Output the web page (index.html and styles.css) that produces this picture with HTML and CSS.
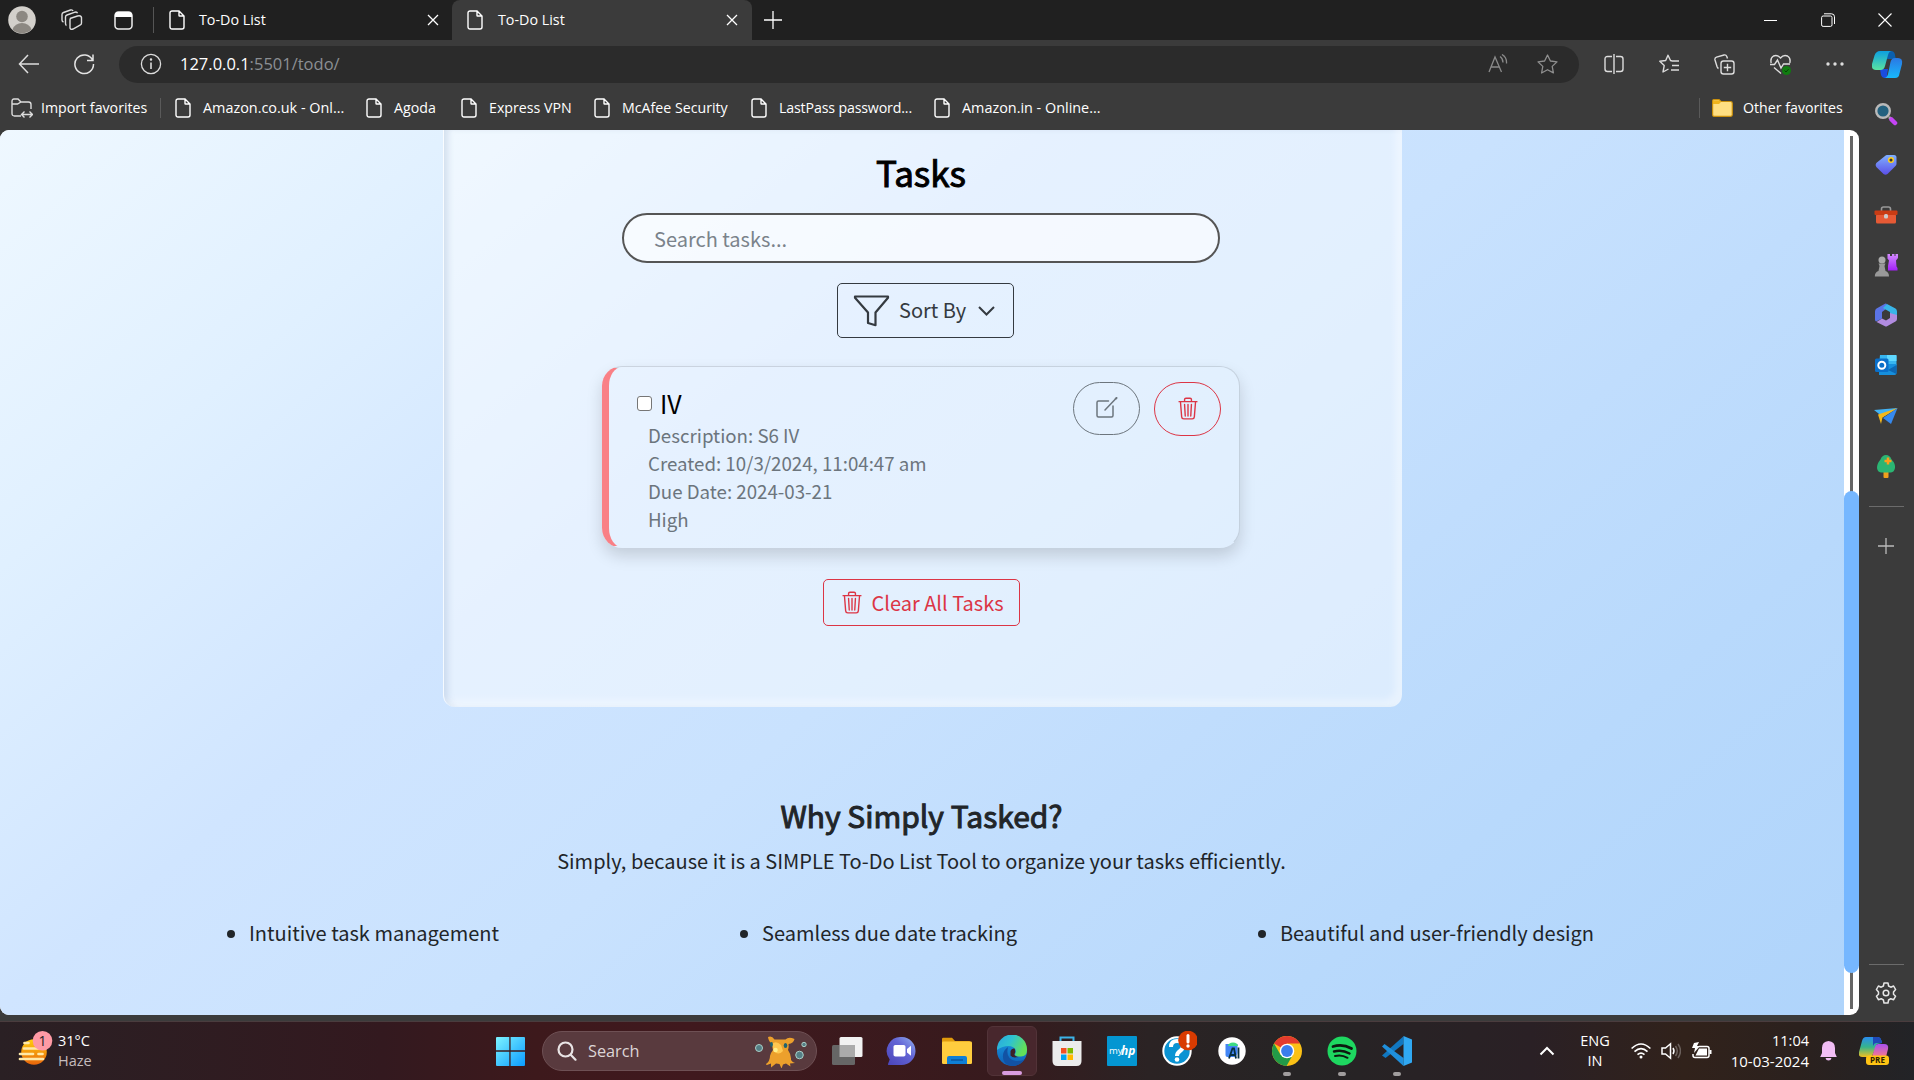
FILE: index.html
```html
<!DOCTYPE html>
<html lang="en">
<head>
<meta charset="utf-8">
<title>To-Do List</title>
<link rel="stylesheet" href="styles.css">
</head>
<body>
<svg class="defs" width="0" height="0">
  <defs>
    <symbol id="doc" viewBox="0 0 16 20"><path d="M3 1h7l5 5v11a2 2 0 0 1-2 2H3a2 2 0 0 1-2-2V3a2 2 0 0 1 2-2zM10 1v4.500q0 .5.5.5H15" fill="none" stroke="currentColor" stroke-width="1.4"/></symbol>
    <symbol id="close" viewBox="0 0 12 12"><path d="M1 1l10 10M11 1L1 11" stroke="currentColor" stroke-width="1.3"/></symbol>
    <symbol id="trash" viewBox="0 0 16 16"><path fill="currentColor" d="M6.500 1h3a.5.5 0 0 1 .5.5v1H6v-1a.5.5 0 0 1 .5-.5M11 2.500v-1A1.500 1.500 0 0 0 9.500 0h-3A1.500 1.500 0 0 0 5 1.500v1H1.500a.5.5 0 0 0 0 1h.538l.853 10.660A2 2 0 0 0 4.885 16h6.230a2 2 0 0 0 1.994-1.840l.853-10.660h.538a.5.5 0 0 0 0-1zm1.958 1-.846 10.580a1 1 0 0 1-.997.920h-6.230a1 1 0 0 1-.997-.920L3.042 3.500zm-7.487 1a.5.5 0 0 1 .528.470l.5 8.500a.5.5 0 0 1-.998.060L5 5.030a.5.5 0 0 1 .470-.530zm5.058 0a.5.5 0 0 1 .470.530l-.5 8.500a.5.5 0 1 1-.998-.060l.5-8.500a.5.5 0 0 1 .528-.470M8 4.500a.5.5 0 0 1 .5.5v8.500a.5.5 0 0 1-1 0V5a.5.5 0 0 1 .5-.5"/></symbol>
    <linearGradient id="gTeal" x1="0" y1="0" x2="0" y2="1"><stop offset="0" stop-color="#0c9fe0"/><stop offset="1" stop-color="#5be3a0"/></linearGradient>
    <linearGradient id="gBlue" x1="0" y1="0" x2="0" y2="1"><stop offset="0" stop-color="#2b78e4"/><stop offset="1" stop-color="#17b8fb"/></linearGradient>
    <linearGradient id="gTag" x1="0" y1="0" x2="0" y2="1"><stop offset="0" stop-color="#7fb0ff"/><stop offset="1" stop-color="#5b4fe8"/></linearGradient>
    <linearGradient id="gViolet" x1="0" y1="0" x2="0" y2="1"><stop offset="0" stop-color="#d38bff"/><stop offset="1" stop-color="#a21ff5"/></linearGradient>
    <linearGradient id="gWin" x1="0" y1="0" x2="1" y2="1"><stop offset="0" stop-color="#7df3ff"/><stop offset="1" stop-color="#0a9bff"/></linearGradient>
    <linearGradient id="gChat" x1="0" y1="1" x2="1" y2="0"><stop offset="0" stop-color="#4a43b8"/><stop offset=".6" stop-color="#6466d6"/><stop offset="1" stop-color="#93b4f0"/></linearGradient>
    <linearGradient id="gEdgeA" x1="0" y1="0" x2="1" y2=".4"><stop offset="0" stop-color="#2aa7e0"/><stop offset=".5" stop-color="#2fc3d0"/><stop offset="1" stop-color="#62e05a"/></linearGradient>
    <linearGradient id="gEdgeB" x1="0" y1="0" x2="0" y2="1"><stop offset="0" stop-color="#1b9de2"/><stop offset="1" stop-color="#0d5fb8"/></linearGradient>
    <linearGradient id="gSun" x1="0" y1="0" x2="0" y2="1"><stop offset="0" stop-color="#ffcf10"/><stop offset="1" stop-color="#e8640a"/></linearGradient>
    <linearGradient id="gPre" x1="0" y1="0" x2="0" y2="1"><stop offset="0" stop-color="#2a8cf0"/><stop offset=".5" stop-color="#35b58c"/><stop offset="1" stop-color="#f0c020"/></linearGradient>
    <linearGradient id="gPink" x1="0" y1="0" x2="0" y2="1"><stop offset="0" stop-color="#a950f0"/><stop offset="1" stop-color="#f77a88"/></linearGradient>
  </defs>
</svg>

<header class="tabs">
  <div class="tools">
    <svg width="28" height="28" viewBox="0 0 28 28"><circle cx="14" cy="14" r="13.800" fill="#d3d0cb"/><circle cx="14" cy="10.500" r="5.800" fill="#8c8882"/><path d="M4.500 23.500q2.500-6.500 9.500-6.500t9.500 6.500A13.800 13.800 0 0 1 4.500 23.500z" fill="#8c8882"/></svg>
    <svg class="ws" width="22" height="22" viewBox="0 0 22 22" fill="none" stroke="#ddd" stroke-width="1.400"><path d="M9 9.500l7.500-2.500q3.500-.8 4 1.500v5.500q0 1.500-1.500 2.200l-7 3.800q-2.500 1-3-1V11q0-1 .5-1.500zM5.500 16.500q-1-.5-1-2V8q0-1.500 1.500-2l8-2.800q2-.5 2.500 1M2.500 13Q1 12.500 1 11V5.500Q1 4 2.500 3.500l7-2.500q2-.5 2.500 1"/></svg>
    <svg class="ta" width="19" height="19" viewBox="0 0 19 19"><rect x="1" y="1" width="17" height="17" rx="3.500" fill="none" stroke="#eee" stroke-width="1.500"/><path d="M1 5V4q0-3 3-3h11q3 0 3 3v2H1z" fill="#fff"/></svg>
  </div>
  <div class="tab tab-idle"><svg width="16" height="20"><use href="#doc"/></svg><span>To-Do List</span><svg class="x" width="12" height="12"><use href="#close"/></svg></div>
  <div class="tab tab-active"><svg width="16" height="20"><use href="#doc"/></svg><span>To-Do List</span><svg class="x" width="12" height="12"><use href="#close"/></svg></div>
  <svg class="newtab" width="18" height="18" viewBox="0 0 18 18" stroke="#fff" stroke-width="1.300"><path d="M9 0v18M0 9h18"/></svg>
  <div class="wincontrols">
    <svg width="14" height="14" viewBox="0 0 14 14"><path d="M0 7.500h13" stroke="#fff"/></svg>
    <svg width="14" height="14" viewBox="0 0 14 14" fill="none" stroke="#fff"><rect x=".6" y="3" width="10.400" height="10.400" rx="1.500"/><path d="M3 .8h7.500q3 0 3 3V11"/></svg>
    <svg width="14" height="14" viewBox="0 0 14 14" stroke="#fff" stroke-width="1.100"><path d="M.5.5l13 13M13.500.5l-13 13"/></svg>
  </div>
</header>

<nav class="toolbar">
  <svg class="back" width="22" height="20" viewBox="0 0 22 20" fill="none" stroke="#ddd" stroke-width="1.500"><path d="M10 1L1.500 10l8.500 9M1.500 10H21"/></svg>
  <svg class="reload" width="22" height="22" viewBox="0 0 22 22" fill="none" stroke="#e4e4e4" stroke-width="1.500"><path d="M19.500 7A9.300 9.300 0 1 0 20.500 11M20 1.500v6h-6"/></svg>
  <div class="address">
    <svg width="22" height="22" viewBox="0 0 22 22" fill="none" stroke="#ddd" stroke-width="1.300"><circle cx="11" cy="11" r="9.600"/><path d="M11 9.500V16" stroke-width="1.600"/><circle cx="11" cy="6.600" r=".6" fill="#ddd"/></svg>
    <span class="url">127.0.0.1<i>:5501/todo/</i></span>
    <svg class="read" width="20" height="20" viewBox="0 0 20 20" fill="none" stroke="#8a8a8a" stroke-width="1.300"><path d="M1 18L7 3l6.500 15M3.200 13h8M12 2.500q3 2 3 6M14 .5q5 3 4.500 9"/></svg>
    <svg width="21" height="20" viewBox="0 0 21 20" fill="none" stroke="#8f8f8f" stroke-width="1.300" stroke-linejoin="round"><path d="M10.500 1l2.900 6 6.600.9-4.800 4.500 1.200 6.500-5.900-3.200L4.600 19l1.200-6.600L1 7.900 7.600 7z"/></svg>
  </div>
  <div class="actions">
    <svg width="20" height="20" viewBox="0 0 20 20" fill="none" stroke="#ddd" stroke-width="1.400"><path d="M8 2.500H3.500Q1 2.500 1 5v10q0 2.500 2.500 2.500H8M12 2.500h4.500Q19 2.500 19 5v10q0 2.500-2.500 2.500H12M10 0v20"/></svg>
    <svg width="20" height="20" viewBox="0 0 20 20" fill="none" stroke="#ddd" stroke-width="1.400" stroke-linejoin="round"><path d="M13 7l-1.500-.5L9 1.200 6.700 6.500.8 7.300l4.400 4.300L4 18l5.500-3M13 7h7M13 11.500h7M12 16h8"/></svg>
    <svg width="21" height="21" viewBox="0 0 21 21" fill="none" stroke="#ddd" stroke-width="1.400"><rect x="7" y="7" width="13" height="13" rx="2.500"/><path d="M13.500 9.800v7.400M9.800 13.500h7.400M4.500 14.500Q3.500 14 3 12.500L1 6q-.5-2 1.500-2.800L10 1q2-.5 2.800 1.500l.7 2"/></svg>
    <svg width="21" height="21" viewBox="0 0 21 21" fill="none" stroke="#ddd" stroke-width="1.400"><path d="M1.200 9Q0 4 3.500 2 7.500.3 10.500 4q3-3.700 7-2Q21 4 19.800 9M0 10.500h4.500L7.500 6l3.500 8 2.500-4H20M4 13.500l7 6"/><circle cx="16.500" cy="16.500" r="4.500" fill="#107c10" stroke="none"/><path d="M14.500 16.500l1.500 1.500 2.500-2.800" stroke="#083f08" stroke-width="1"/></svg>
    <svg width="18" height="20" viewBox="0 0 18 20" fill="#ddd"><circle cx="2" cy="10" r="1.700"/><circle cx="9" cy="10" r="1.700"/><circle cx="16" cy="10" r="1.700"/></svg>
  </div>
  <svg class="copilot" width="31" height="27" viewBox="0 0 31 27"><path d="M14 0h5q3 0 3.800 3l1 5H15z" fill="#0a5fae"/><path d="M8 18h8l-1 6q1 3 3 3h-5q-3 0-4-3z" fill="#1a4ce0"/><path d="M8 0h12q-3 0-4 4l-3 11q-1 4-4.500 4H4q-5 0-4-6L2.500 4.500Q4 0 8 0z" fill="url(#gTeal)"/><path d="M23 27H12q3 0 4-4l2.500-12q1-4 4.500-4h3q5 0 4 6l-2.500 9.500Q27 27 23 27z" fill="url(#gBlue)"/></svg>
</nav>

<div class="middle">
  <div class="left">
    <div class="favorites">
      <svg width="22" height="20" viewBox="0 0 22 20" fill="none" stroke="#ddd" stroke-width="1.400"><path d="M10 18H3.500Q1 18 1 15.500v-12Q1 1 3 1h4l3 3h7.500Q20 4 20 6.500V11M1 6h5.500L10 4M11 16.500h10M13.500 13.500l-3 3 3 3M18.500 13.500l3 3-3 3"/></svg>
      <span class="import">Import favorites</span><b class="bar"></b>
      <a class="f1"><svg width="16" height="20"><use href="#doc"/></svg>Amazon.co.uk - Onl...</a>
      <a class="f2"><svg width="16" height="20"><use href="#doc"/></svg>Agoda</a>
      <a class="f3"><svg width="16" height="20"><use href="#doc"/></svg>Express VPN</a>
      <a class="f4"><svg width="16" height="20"><use href="#doc"/></svg>McAfee Security</a>
      <a class="f5"><svg width="16" height="20"><use href="#doc"/></svg>LastPass password...</a>
      <a class="f6"><svg width="16" height="20"><use href="#doc"/></svg>Amazon.in - Online...</a>
      <b class="bar bar-right"></b>
      <svg class="folder" width="21" height="18" viewBox="0 0 21 18"><path d="M.6 2q0-1.400 1.400-1.400h5L9 2.500h9.500q1.800 0 1.800 1.800v11.500q0 1.500-1.500 1.500h-17Q.6 17.300.6 15.800z" fill="#ffdf82" stroke="#c98f0c" stroke-width="1.200"/><path d="M1 1.500h6.500l1.500 1.500-2 2H1z" fill="#f0b41c"/></svg>
      <span class="other">Other favorites</span>
    </div>
    <div class="viewport">
      <main class="page">
        <section class="panel">
          <h2 class="title">Tasks</h2>
          <div class="search">Search tasks...</div>
          <div class="sort">
            <svg width="37" height="32" viewBox="0 0 37 32" fill="none" stroke="#343a40" stroke-width="2.200" stroke-linejoin="round"><path d="M2 1.500h33v1.200L22.500 17.500v12.700L15 28V17.500L2 2.700z"/></svg>
            <span>Sort By</span>
            <svg class="chev" width="17" height="10" viewBox="0 0 17 10" fill="none" stroke="#343a40" stroke-width="2"><path d="M1 1l7.500 7.500L16 1"/></svg>
          </div>
          <article class="card">
            <div class="body">
              <div class="name"><i class="check"></i>IV</div>
              <p>Description: S6 IV</p><p>Created: 10/3/2024, 11:04:47 am</p><p>Due Date: 2024-03-21</p><p>High</p>
            </div>
            <div class="btn edit"><svg width="23" height="22" viewBox="0 0 23 22" fill="none" stroke="#6c757d" stroke-width="1.500" stroke-linecap="round"><path d="M13.500 4H3.500Q2 4 2 5.500v13Q2 20 3.500 20h13q1.500 0 1.500-1.500V9M10 13L20 2.500" /><path d="M20.700 1.800l.8-.8" stroke-width="2"/></svg></div>
            <div class="btn del"><svg width="22" height="23" preserveAspectRatio="none"><use href="#trash"/></svg></div>
          </article>
          <div class="clear"><svg width="22" height="23"><use href="#trash"/></svg><span>Clear All Tasks</span></div>
        </section>
        <h2 class="why">Why Simply Tasked?</h2>
        <p class="sub">Simply, because it is a SIMPLE To-Do List Tool to organize your tasks efficiently.</p>
        <ul class="points"><li>Intuitive task management</li><li>Seamless due date tracking</li><li>Beautiful and user-friendly design</li></ul>
      </main>
      <div class="scroll"><i class="track"></i><i class="thumb"></i></div>
    </div>
  </div>
  <aside class="side">
    <svg width="24" height="24" viewBox="0 0 24 24"><path d="M15 15l2.500 2.500" stroke="#aaa" stroke-width="2.500"/><path d="M17.500 17.500l3.500 3.500" stroke="#c544f5" stroke-width="4.500" stroke-linecap="round"/><circle cx="9" cy="9" r="6.800" fill="#23617f" stroke="#b9b9b9" stroke-width="2.400"/></svg>
    <svg class="tag" width="24" height="24" viewBox="0 0 24 24"><path d="M13 2h7q2.500 0 2.500 2.500V11q0 1-1 2l-8 8q-2 1.500-4 0L2.300 14q-1.500-2 0-4L11 3q1-1 2-1z" fill="url(#gTag)"/><circle cx="17" cy="7" r="2.300" fill="#333" stroke="#ffd01e" stroke-width="1.500"/></svg>
    <svg width="24" height="24" viewBox="0 0 24 24"><path d="M7.500 8V6q0-2 2-2h5q2 0 2 2v2" fill="none" stroke="#999" stroke-width="1.600"/><rect x="2" y="11" width="20" height="9.500" rx="1.500" fill="#e65a35"/><rect x=".5" y="7.500" width="23" height="4.500" rx="1" fill="#c93c14"/><rect x="10" y="11" width="4" height="4.500" rx="1.500" fill="#ccc"/></svg>
    <svg width="24" height="24" viewBox="0 0 24 24"><path d="M13.500 1H16v2h2V1h2.500v2h1V1H24v4l-2 2.500 .5 6q1.500 1 1 4H14V13l1-5.500-1.500-2z" fill="url(#gViolet)"/><circle cx="8" cy="7" r="3.500" fill="#aaa"/><path d="M4.500 10.500h7L10.500 13l1 5q3.500 1 3.500 5.500H.8q0-4.500 3.700-5.500l1-5z" fill="#999"/></svg>
    <svg width="24" height="24" viewBox="0 0 24 24"><path d="M11 .7L2.500 5.500Q1 6.500 1 8.500v8q0 1.500 1 2l6-3V9l6-4.500L12.500.7q-.7-.4-1.500 0z" fill="#5b74e6"/><path d="M13 1l8.500 4.500Q23 6.500 23 8.500v7l-7-3.500V9L9 5z" fill="#39b5e8"/><path d="M23 12v4q0 1.500-1.500 2.500L13 23.300q-1 .5-2 0L2.500 19 8 15.500l4 2 4-2.500V10z" fill="#b18be0"/></svg>
    <svg width="24" height="24" viewBox="0 0 24 24"><path d="M6 2h15q1.500 0 1.500 1.500v9H5z" fill="#37b6f0"/><path d="M13 2h9.500v6H13z" fill="#5fd8ff"/><path d="M5 11l17.500 0v9q0 2-2 2H5z" fill="#168fdc"/><path d="M14 17l8.500-5v9z" fill="#0c67b4"/><rect x="1" y="5.500" width="13.500" height="13.500" rx="1.500" fill="#0a6fc9"/><circle cx="7.800" cy="12.200" r="3.500" fill="none" stroke="#fff" stroke-width="2"/></svg>
    <svg width="24" height="24" viewBox="0 0 24 24"><path d="M0 6L23.500 4 9 13z" fill="#42b3f5"/><path d="M23.500 4L17 20l-8-6z" fill="#3689ee"/><path d="M4 10.500L23.500 4 8.500 13.500 7 20z" fill="#f5b81a"/></svg>
    <svg width="24" height="24" viewBox="0 0 24 24"><rect x="9.500" y="16" width="5" height="8" rx="1" fill="#f0a01c"/><path d="M12 1q4 0 5.500 4.500 4 4 3.500 8.500-.7 4-4 4.500H7q-3.500-.5-4-4.500 0-4.500 3.500-8.500Q8 1 12 1z" fill="#2bb573"/><path d="M14 3.500v7M10.500 7h7" stroke="#ff9d1c" stroke-width="2.500"/></svg>
    <i class="line"></i>
    <svg class="plus" width="16" height="16" viewBox="0 0 16 16" stroke="#bbb" stroke-width="1.300"><path d="M8 0v16M0 8h16"/></svg>
    <i class="line line-low"></i>
    <svg class="gear" width="22" height="22" viewBox="0 0 22 22" fill="none" stroke="#e6e6e6" stroke-width="1.500" stroke-linejoin="round"><path d="M9 1h4l.6 3 2.200 1.200 2.800-1.200 2 3.500L18.500 10v2.200l2.100 2-2 3.500-2.800-1-2.200 1.300L13 21H9l-.6-3-2.200-1.300-2.800 1-2-3.500 2.100-2V10L1.400 7.500l2-3.500 2.800 1.200L8.400 4z"/><circle cx="11" cy="11" r="2.800"/></svg>
  </aside>
</div>

<footer class="taskbar">
  <div class="weather">
    <svg width="36" height="36" viewBox="0 0 36 36"><circle cx="17" cy="21" r="12.800" fill="url(#gSun)"/><g stroke="#ffe9a8" stroke-width="2.700" stroke-linecap="round"><path d="M7.500 12h4M7 17.500h18M3 23h13M21.500 23h4M3 28h23"/></g><circle cx="25.500" cy="9.800" r="9.800" fill="#ff9aa5"/><text x="25.500" y="15" text-anchor="middle" class="num">1</text></svg>
    <div><div>31°C</div><div class="dim">Haze</div></div>
  </div>
  <svg class="start" width="30" height="30" viewBox="0 0 30 30" fill="url(#gWin)"><path d="M1 2q0-1 1-1h12.300v13.300H1zM15.600 1H29q1 0 1 1v12.300H15.600zM1 15.700h13.300V30H2q-1 0-1-1zM15.600 15.700H30V29q0 1-1 1H15.600z"/></svg>
  <div class="find">
    <svg width="20" height="20" viewBox="0 0 20 20" fill="none" stroke="#e9e4e5" stroke-width="2.200" stroke-linecap="round"><circle cx="8.500" cy="8.500" r="7"/><path d="M13.700 13.700l4.800 5"/></svg>
    <span>Search</span>
    <svg class="pet" width="54" height="34" viewBox="0 0 54 34"><circle cx="5" cy="14" r="3.500" fill="#547f86" stroke="#aad0c8"/><circle cx="45.500" cy="21" r="3.800" fill="#547f86" stroke="#aad0c8"/><circle cx="50" cy="10.500" r="2.200" fill="#547f86" stroke="#aad0c8"/><path d="M14 3q4-1.500 6.500 2.500h11q3-3 9-.5-1 4.500-6 5 .5 3-.5 6 3.500 5 3 10 1.500 2.500 4 3l-5 .5.5 3-4.500-3-3 1-1.500 4-2-4.500-3.500-.5-5 4v-4l-4 1.500q-1 0-1-1 4-3 4-8 .5-3 3-6-1-3-.5-6-4-2-4.500-7z" fill="#eca02c"/><path d="M18 10q4-4 9 1l2 6q-5 5-9 0z" fill="#ffc850"/><ellipse cx="17.500" cy="10.500" rx="1.400" ry="2.400" fill="#1f6370"/><ellipse cx="31.500" cy="11.500" rx="1.800" ry="2.600" fill="#1f6370"/><circle cx="21.500" cy="16" r="2.300" fill="#fff08a"/></svg>
  </div>
  <div class="apps">
    <div class="app"><svg width="32" height="32" viewBox="0 0 32 32"><rect x="8.500" y="2" width="23" height="20" rx="1.500" fill="#f2f2f2"/><rect x="1" y="10" width="23" height="20" rx="1.500" fill="#666"/><rect x="8.500" y="10" width="15.500" height="12" fill="#ababab"/></svg></div>
    <div class="app"><svg width="32" height="32" viewBox="0 0 32 32"><path d="M16 2a14 14 0 1 1-1 28H2.500q-1-.5-.3-1.500l1.500-4A14 14 0 0 1 16 2z" fill="url(#gChat)"/><rect x="7.500" y="10" width="12" height="11.500" rx="1.800" fill="#fff"/><path d="M21 14l4-3.300v10L21 17.500z" fill="#fff"/></svg></div>
    <div class="app"><svg width="32" height="32" viewBox="0 0 32 32"><path d="M1 4q0-1.300 1.300-1.300H11L14 6h14q2 0 2 3v8H1z" fill="#e09b0c"/><rect x="1" y="6.500" width="30" height="22.500" rx="1.300" fill="#ffcd3e"/><path d="M6 29v-6q0-2 2-2h16q2 0 2 2v6z" fill="#0f7fd6"/><path d="M10 25h12" stroke="#0a4f96" stroke-width="1.300"/></svg></div>
    <div class="app current"><svg width="32" height="32" viewBox="0 0 32 32"><circle cx="16" cy="16" r="15" fill="url(#gEdgeB)"/><path d="M1 15A15 15 0 0 1 31 14q.5 7-6 7.500-5 .5-6.500-2 2-2 1-5-2-3.500-7-3.500-6 0-11.500 4z" fill="url(#gEdgeA)"/><path d="M12 12q-3 12 8 14 4 .5 8.500-1.500Q24 31 16 31 6 30 7 20q.5-5 5-8z" fill="#1252a4"/><path d="M14.500 16q1-3 4-2.500 1.500 3 0 5.500-.5 2 4 3-6 1.500-8-1.500z" fill="#3d2026"/></svg><i></i></div>
    <div class="app"><svg width="32" height="32" viewBox="0 0 32 32"><path d="M9.500 8V2.500h13V8" fill="none" stroke="#3cb3e8" stroke-width="2"/><path d="M1.500 6h29v20q0 5-5 5h-19q-5 0-5-5z" fill="#ececec"/><path d="M10 13h5.500v5.500H10z" fill="#f25022"/><path d="M16.500 13H22v5.500h-5.500z" fill="#7fba00"/><path d="M10 19.500h5.500V25H10z" fill="#00a4ef"/><path d="M16.500 19.500H22V25h-5.500z" fill="#ffb900"/></svg></div>
    <div class="app"><svg width="32" height="32" viewBox="0 0 32 32"><rect x="1" y="1" width="30" height="30" rx="1" fill="#0496d2"/><text x="3" y="19" class="my">my</text><text x="15" y="20" class="hp">hp</text></svg></div>
    <div class="app"><svg width="40" height="40" viewBox="0 0 40 40" class="help"><circle cx="20" cy="20" r="13.700" fill="#0b93d3" stroke="#fff" stroke-width="2"/><path d="M14 16q0-6 6-6t6 5q0 3-3 5t-3 5" fill="none" stroke="#fff" stroke-width="4"/><circle cx="20" cy="28.500" r="2.300" fill="#fff"/><circle cx="31" cy="9.500" r="9.800" fill="#d83b01"/><path d="M31 4.500v6.500" stroke="#fff" stroke-width="3" stroke-linecap="round"/><circle cx="31" cy="15" r="1.700" fill="#fff"/></svg></div>
    <div class="app"><svg width="32" height="32" viewBox="0 0 32 32"><circle cx="16" cy="16" r="13.700" fill="#fff"/><path d="M9.500 9h12v9q-1 4-4 4h-6q-2 0-2-2z" fill="#4286f5"/><path d="M12 11q.5-3.500 5-3.500t5 3.500z" fill="#3ddc84"/><path d="M13 23.500l3.500-10h1.500l2 10M14.500 20h4.500M22.500 12.500v11" stroke="#073042" stroke-width="1.800" fill="none"/></svg></div>
    <div class="app"><svg width="32" height="32" viewBox="0 0 32 32"><circle cx="16" cy="16" r="15" fill="#fbc116"/><path d="M16 16L3 8.500A15 15 0 0 1 29 8.500H16z" fill="#e33b2e"/><path d="M3 8.500A15 15 0 0 0 15.500 31l6.500-11.500L16 16l-6.500 3.700z" fill="#229a48"/><circle cx="16" cy="16" r="7.300" fill="#fff"/><circle cx="16" cy="16" r="5.900" fill="#3b7ded"/></svg><i></i></div>
    <div class="app"><svg width="32" height="32" viewBox="0 0 32 32" fill="none" stroke="#0d1a10" stroke-linecap="round"><circle cx="16" cy="16" r="14.500" fill="#1ed760" stroke="none"/><path d="M7 11.500q9.500-3 18.500 2" stroke-width="2.800"/><path d="M8 16.500q8-2.300 15.500 2" stroke-width="2.400"/><path d="M9 21q6.500-1.800 12.500 1.800" stroke-width="2"/></svg><i></i></div>
    <div class="app"><svg width="32" height="32" viewBox="0 0 32 32"><path d="M1 20.500L22.500 1.200V9L4.500 23z" fill="#1177c0"/><path d="M1 11.500L3.500 9l19 14v8z" fill="#1f8fdc"/><path d="M22.500 1l8.500 3.500v23L22.500 31z" fill="#30a8f2"/></svg><i></i></div>
  </div>
  <svg class="up" width="16" height="10" viewBox="0 0 16 10" fill="none" stroke="#fff" stroke-width="2"><path d="M1.500 8.500L8 2l6.500 6.500"/></svg>
  <div class="lang"><div>ENG</div><div>IN</div></div>
  <div class="status">
    <svg width="20" height="16" viewBox="0 0 20 16" fill="none" stroke="#fff" stroke-width="1.600"><path d="M.6 5.500q9.400-9 18.800 0M3.500 8.700q6.500-6 13 0M6.500 11.700q3.500-3 7 0"/><circle cx="10" cy="14" r="1.500" fill="#fff" stroke="none"/></svg>
    <svg width="20" height="18" viewBox="0 0 20 18" fill="none" stroke="#fff" stroke-width="1.500"><path d="M1 6h3.500L9.500 1.800v14.400L4.500 12H1zM12 6q2 3 0 6"/><path d="M14.500 4q3.500 5 0 10M17 2q5 7 0 14" stroke="#6b605c"/></svg>
    <svg width="21" height="18" viewBox="0 0 21 18"><path d="M8 4.500h8q2 0 2 2v7q0 2-2 2H4q-2 0-2-2V12" fill="none" stroke="#fff" stroke-width="1.500"/><path d="M8 6.500h8v7H4.500zM18.500 8h2v4h-2zM3 1l5-1-2 4h3l-6 7 1-5H1z" fill="#fff"/></svg>
  </div>
  <div class="clock"><div>11:04</div><div class="date">10-03-2024</div></div>
  <svg class="bell" width="17" height="20" viewBox="0 0 17 20" fill="#f1bdf4"><path d="M8.500 0q6.500.5 6.500 7v5l1.800 4H.2L2 12V7Q2 .5 8.500 0zM5.500 17h6q-.5 2.500-3 2.500t-3-2.500z"/></svg>
  <svg class="pre" width="30" height="30" viewBox="0 0 30 30"><path d="M7 1h12q3 0 4 6l-5 1-4 10q-1 3-4 3H3q-4 0-3-5l3-11q1-4 4-4z" fill="url(#gPre)"/><path d="M14 1h5q3 0 4 6h-6q-2 0-3 3z" fill="#1f49b8"/><path d="M19 8h6q5 0 4 5l-2 8H13l3-10q1-3 3-3z" fill="url(#gPink)"/><rect x="7" y="19.500" width="23" height="9.500" rx="3" fill="#ffc414"/><text x="18.500" y="27.300" text-anchor="middle" class="pretext">PRE</text></svg>
</footer>
</body>
</html>
```
FILE: styles.css
```css
* { box-sizing: border-box; }
body { margin: 0; width: 1914px; height: 1080px; overflow: hidden; display: flex; flex-direction: column; background: #3b3b3b; color: #fff; font: 14.3px/20px "Open Sans", "Noto Sans", sans-serif; }
svg { display: block; flex: none; }
.defs { position: absolute; }

/* tab strip */
.tabs { height: 40px; background: #202020; display: flex; align-items: center; flex: none; }
.tools { width: 154px; height: 26px; border-right: 1px solid #555; display: flex; align-items: center; padding-left: 8px; }
.ws { margin-left: 25px; }
.ta { margin-left: 31px; }
.tab { height: 40px; display: flex; align-items: center; color: #fff; }
.tab span { margin-left: 14px; flex: 1; }
.tab .x { margin-right: 13px; }
.tab-idle { width: 298px; padding-left: 15px; }
.tab-active { width: 300px; padding-left: 15px; background: #3b3b3b; border-radius: 8px 8px 0 0; }
.tab-active span { margin-left: 15px; }
.tab-active .x { margin-right: 14px; }
.newtab { margin-left: 12px; }
.wincontrols { margin-left: auto; margin-right: 22px; display: flex; gap: 43px; }

/* toolbar */
.toolbar { height: 48px; display: flex; align-items: center; flex: none; padding-left: 18px; }
.reload { margin-left: 33px; }
.address { margin-left: 24px; width: 1460px; height: 37px; border-radius: 19px; background: #2b2b2b; display: flex; align-items: center; padding: 0 21px; }
.url { margin-left: 18px; font-size: 16.5px; flex: 1; }
.url i { font-style: normal; color: #8b8f94; }
.read { margin-right: 29px; }
.actions { display: flex; align-items: center; gap: 35px; margin-left: 25px; }
.copilot { margin-left: 28px; }

/* favorites */
.middle { display: flex; flex: none; height: 933px; }
.left { width: 1859px; }
.favorites { height: 42px; display: flex; align-items: center; padding: 0 18px 3px 11px; white-space: nowrap; font-size: 14.2px; }
.favorites a { display: flex; align-items: center; gap: 12px; }
.import { width: 119px; margin-left: 8px; }
.bar { width: 1px; height: 20px; background: #5a5a5a; }
.f1 { width: 191px; margin-left: 14px; font-size: 14.4px; }
.f2 { width: 95px; }
.f3 { width: 133px; }
.f4 { width: 157px; }
.f5 { width: 183px; letter-spacing: -.15px; }
.f6 { font-size: 14.4px; }
.other { width: 98px; }
.bar-right { margin-left: auto; }
.folder { margin: 0 10px 0 12px; }

/* viewport */
.viewport { height: 885px; display: flex; border-radius: 9px; overflow: hidden; background: #fff; }
.page { width: 1844px; background: linear-gradient(140deg, #eff8ff 0%, #e0f0ff 18%, #d0e5ff 36%, #c9e2fe 52%, #c0ddfd 66%, #b8d9fc 80%, #afd4fb 100%); color: #212529; font: 20px/30px "Noto Sans CJK SC", sans-serif; display: flex; flex-direction: column; align-items: center; }
.panel { width: 959px; height: 577px; border-radius: 0 0 12px 12px; background: rgba(255,255,255,.47); box-shadow: inset -7px -7px 6px rgba(255,255,255,.35), inset 6px 0 6px -2px rgba(100,130,170,.2); border-left: 1px solid rgba(255,255,255,.6); display: flex; flex-direction: column; align-items: center; padding: 20px 3px 0 0; flex: none; }
.title, .why { margin: 0; font-weight: 400; white-space: nowrap; }
.title { font-size: 35px; line-height: 44px; color: #000; -webkit-text-stroke: 1px #000; }
.search { width: 598px; height: 50px; margin-top: 19px; border: 2px solid #555; border-radius: 25px; background: rgba(255,255,255,.6); color: #7b838b; padding: 9px 30px; }
.sort { width: 177px; height: 55px; margin: 20px 0 0 9px; border: 1px solid #343a40; border-radius: 5px; color: #343a40; display: flex; align-items: center; padding-left: 15px; }
.sort span { margin: -2px 12px 0 9px; }
.card { width: 638px; height: 182px; margin-top: 28px; border: 1px solid rgba(0,0,0,.125); border-left: 7px solid #f98086; border-bottom-color: transparent; border-radius: 20px; display: flex; box-shadow: 0 8px 16px rgba(0,0,0,.15); padding: 15px 18px 0 28px; }
.body { flex: 1; padding-top: 3px; color: #6c757d; font-size: 18.7px; line-height: 28px; }
.body p { margin: 0 0 0 11px; }
.name { height: 36px; display: flex; align-items: center; color: #000; font-size: 25px; }
.check { width: 15px; height: 15px; margin-right: 8px; background: #fff; border: 1px solid #767676; border-radius: 3px; }
.btn { width: 67px; height: 54px; border: 1px solid #dc3545; border-radius: 27px; color: #dc3545; display: flex; align-items: center; justify-content: center; margin-left: 14px; padding-bottom: 2px; }
.edit { height: 53px; border-color: #6c757d; }
.clear { width: 197px; height: 47px; margin-top: 31px; border: 1px solid #dc3545; border-radius: 5px; color: #dc3545; display: flex; align-items: center; padding-left: 17px; gap: 9px; }
.why { margin-top: 88px; font-size: 30px; line-height: 40px; -webkit-text-stroke: 1px #212529; }
.sub { margin: 11px 0 0; }
.why, .sub { padding-right: 1px; }
.points { align-self: stretch; margin: 42px 0 0; padding: 0 0 0 249px; display: flex; gap: 263px; white-space: nowrap; }
.scroll { width: 15px; position: relative; }
.track { position: absolute; left: 6px; top: 6px; width: 3px; height: 873px; background: #666; }
.thumb { position: absolute; left: 0; top: 361px; width: 15px; height: 482px; border-radius: 8px; background: #76b7ff; }

/* sidebar */
.side { width: 54px; display: flex; flex-direction: column; align-items: center; padding-top: 14px; gap: 26.3px; }
.tag { margin: 1px 0 -1px; }
.line { width: 35px; height: 1px; background: #6b6b6b; margin-top: 2px; flex: none; }
.plus { margin-top: 4px; }
.line-low { margin-top: auto; }
.gear { margin: -9px 0 17px; }

/* taskbar */
.taskbar { height: 59px; border-top: 1px solid #4a3c3e; display: flex; align-items: center; flex: none; background: linear-gradient(90deg, #2a2024 0, #33191f 20%, #3d191c 28%, #40191e 36%, #371a1d 52%, #2b2324 60%, #262425 68%, #2a2025 80%, #31221b 88%, #2b211e 94%, #222327 100%); font-size: 14.5px; padding-bottom: 1px; }
.weather { width: 495px; padding-left: 17px; display: flex; gap: 5px; }
.weather div { line-height: 20px; }
.dim { color: #c4bcbe; }
.num { font: 14px "Open Sans", sans-serif; fill: #222; }
.find { width: 275px; height: 40px; margin-left: 17px; border: 1px solid #6e5054; border-radius: 20px; background: #593a3e; display: flex; align-items: center; padding-left: 14px; font-size: 16.3px; color: #ddd5d6; }
.find span { margin-left: 11px; flex: 1; }
.pet { margin-right: 8px; }
.apps { display: flex; margin-left: 5px; gap: 5px; }
.app { width: 50px; height: 50px; border-radius: 6px; display: flex; align-items: center; justify-content: center; position: relative; }
.app i { position: absolute; left: 21px; bottom: 0; width: 8px; height: 4px; border-radius: 2px; background: #a19d9e; }
.current { background: #48272d; border: 1px solid #523338; }
.current i { left: 14px; width: 20px; background: #d99ce0; }
.my { font: 9.5px "Open Sans", sans-serif; fill: #fff; }
.hp { font: italic 700 12px "Open Sans", sans-serif; fill: #fff; }
.up { margin-left: 117px; }
.lang { width: 40px; margin-left: 20px; text-align: center; }
.status { display: flex; align-items: center; gap: 10px; margin-left: 16px; }
.clock { width: 90px; margin-left: 7px; text-align: right; }
.date { font-size: 15px; }
.bell { margin-left: 11px; }
.pre { margin-left: 22px; }
.pretext { font: 700 8px "Open Sans", sans-serif; fill: #2b2000; }
```
